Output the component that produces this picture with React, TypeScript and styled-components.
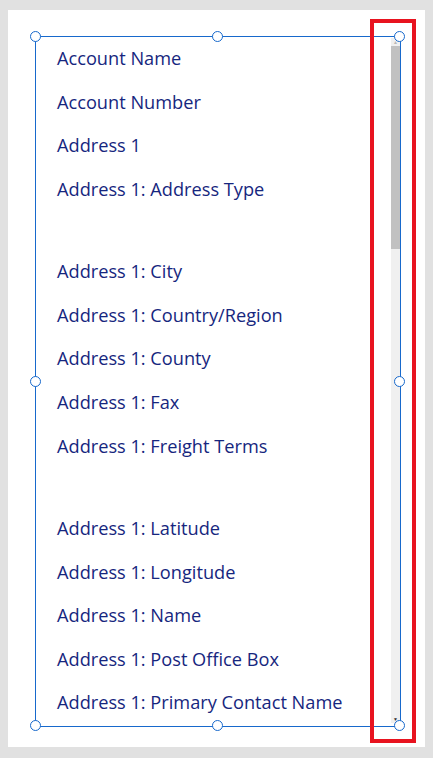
import React from 'react';
import styled, {createGlobalStyle} from 'styled-components';

const fields: (string | null)[] = [
  'Account Name',
  'Account Number',
  'Address 1',
  'Address 1: Address Type',
  null,
  'Address 1: City',
  'Address 1: Country/Region',
  'Address 1: County',
  'Address 1: Fax',
  'Address 1: Freight Terms',
  null,
  'Address 1: Latitude',
  'Address 1: Longitude',
  'Address 1: Name',
  'Address 1: Post Office Box',
  'Address 1: Primary Contact Name',
];

const handles = [
  {x: 0, y: 0},
  {x: 50, y: 0},
  {x: 100, y: 0},
  {x: 0, y: 50},
  {x: 100, y: 50},
  {x: 0, y: 100},
  {x: 50, y: 100},
  {x: 100, y: 100},
];

const App: React.FC = () => (
  <>
    <GlobalStyle />
    <Panel>
      <Frame>
        <List>
          {fields.map((f, i) => (f ? <Item key={i}>{f}</Item> : <Gap key={i} />))}
        </List>
        <Scrollbar>
          <Arrow>▲</Arrow>
          <Thumb />
          <Track />
          <Arrow $dark>▼</Arrow>
        </Scrollbar>
        {handles.map((h, i) => (
          <Handle key={i} style={{left: `${h.x}%`, top: `${h.y}%`}} />
        ))}
      </Frame>
      <Highlight />
    </Panel>
  </>
);
export default App;

const GlobalStyle = createGlobalStyle`
  html, body {
    margin: 0;
    background: #e1e1e1;
  }
  body {
    padding: 10px 8px 11px;
    font-family: "Open Sans", "Noto Sans", sans-serif;
  }
`;

const Panel = styled.div`
  position: relative;
  width: 417px;
  height: 737px;
  background: #ffffff;
  box-sizing: border-box;
  padding: 26px 0 0 27px;
`;

const Frame = styled.div`
  position: relative;
  width: 366px;
  height: 691px;
  box-sizing: border-box;
  border: 1px solid #1769cc;
  display: flex;
`;

const List = styled.div`
  flex: 1;
  overflow: hidden;
  padding: 0 0 0 21px;
`;

const Item = styled.div`
  height: 43.6px;
  line-height: 43.6px;
  font-size: 18.2px;
  color: #16267e;
  white-space: nowrap;
`;

const Gap = styled.div`
  height: 38.8px;
`;

const Scrollbar = styled.div`
  width: 9px;
  margin: 1px 0 3px;
  background: #f0f0f0;
  display: flex;
  flex-direction: column;
`;

const Arrow = styled.div<{$dark?: boolean}>`
  height: 8px;
  font-size: 5px;
  line-height: 8px;
  text-align: center;
  color: ${p => (p.$dark ? '#303030' : '#b8b8b8')};
`;

const Thumb = styled.div`
  height: 203px;
  background: #c1c1c1;
`;

const Track = styled.div`
  flex: 1;
`;

const Handle = styled.div`
  position: absolute;
  width: 9px;
  height: 9px;
  margin: -6px 0 0 -6px;
  border: 1.6px solid #1769cc;
  border-radius: 50%;
  background: #ffffff;
`;

const Highlight = styled.div`
  position: absolute;
  left: 362px;
  top: 9px;
  width: 46px;
  height: 724px;
  box-sizing: border-box;
  border: 4px solid #e8131f;
`;
